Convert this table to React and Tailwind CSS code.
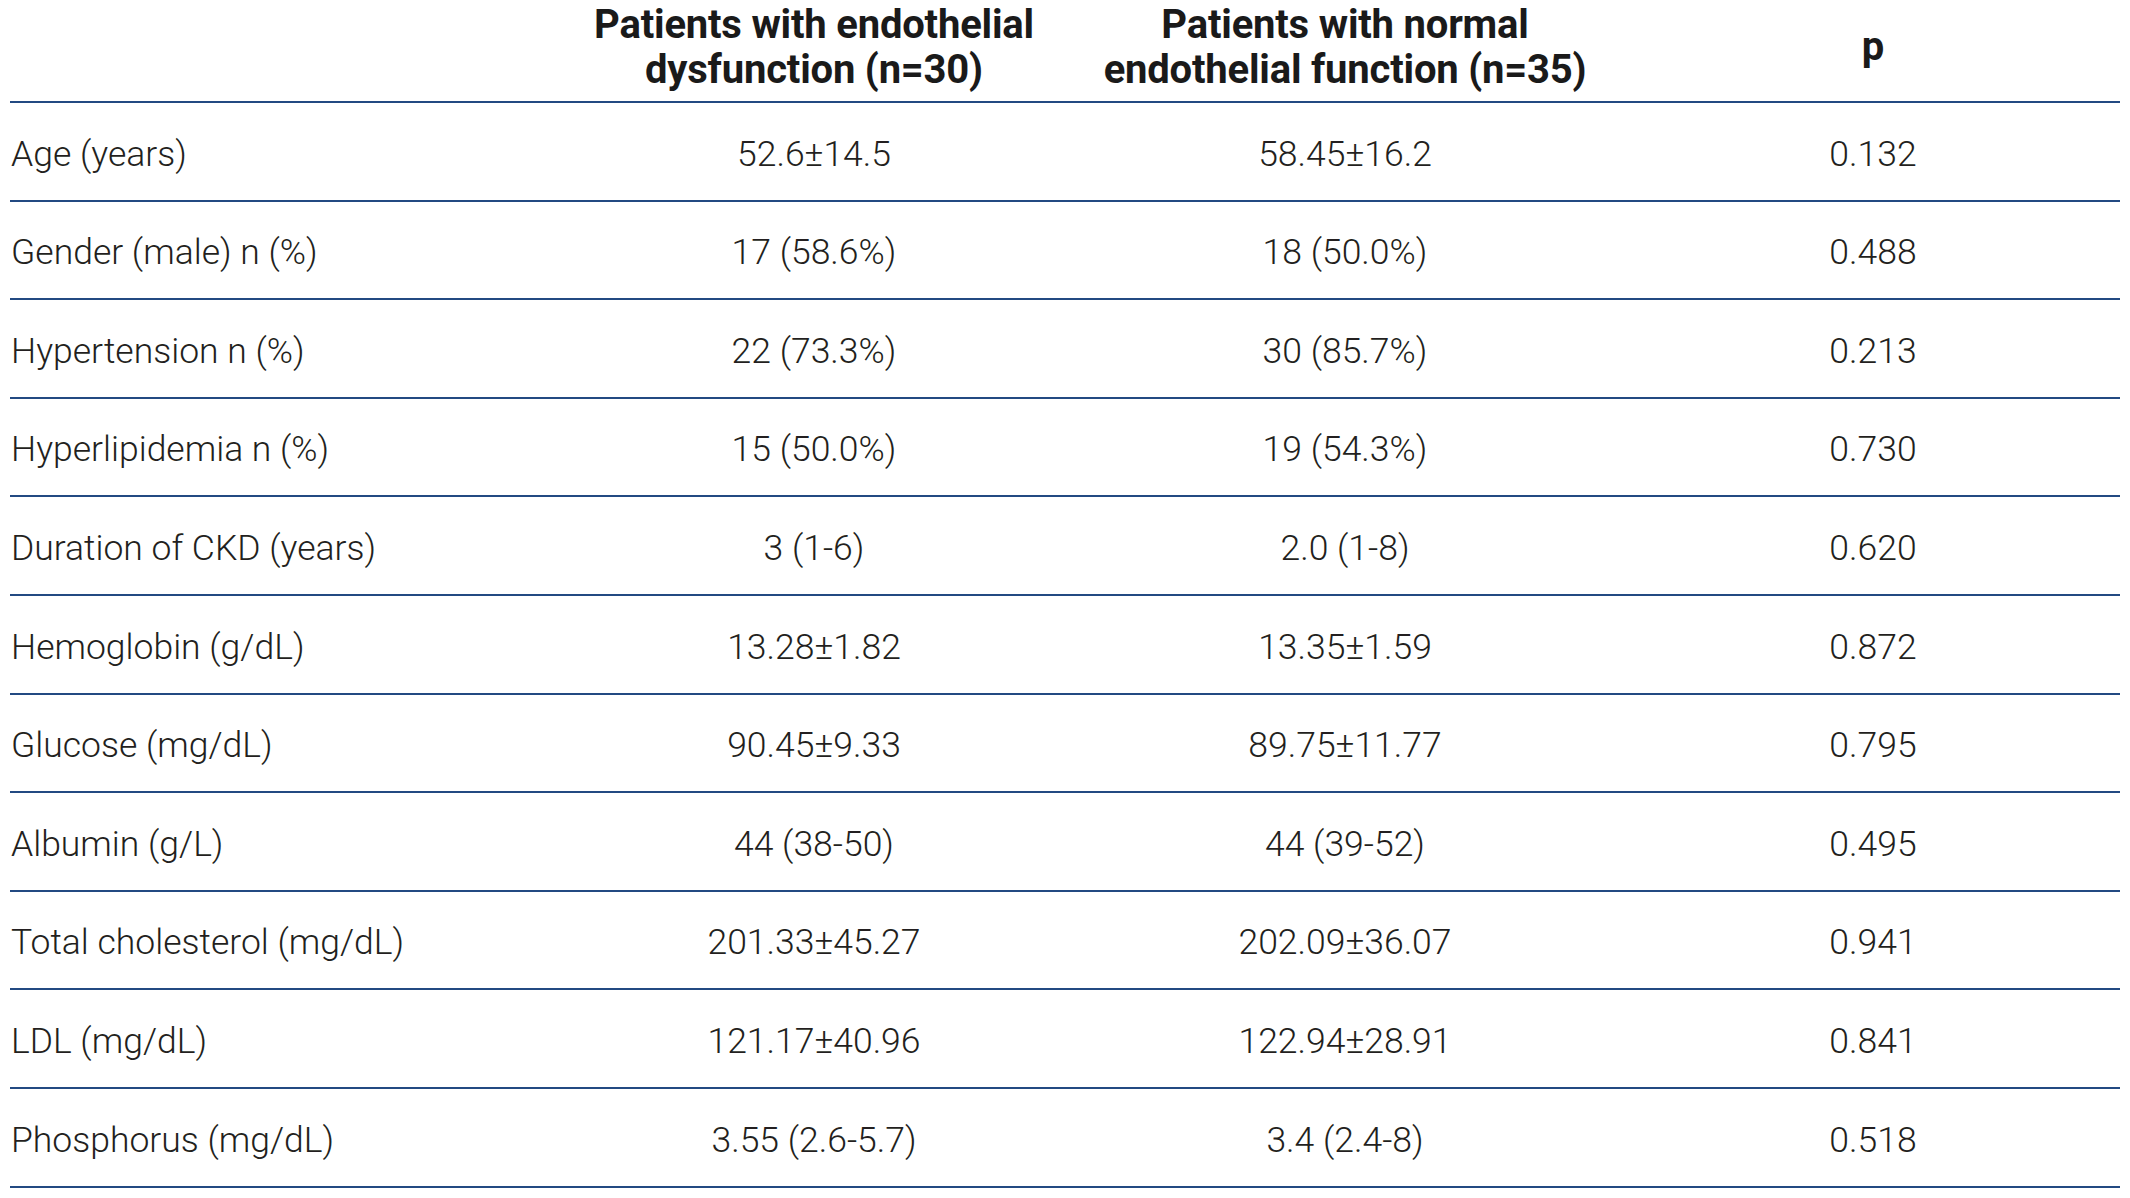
const rows = [
  ['Age (years)', '52.6±14.5', '58.45±16.2', '0.132'],
  ['Gender (male) n (%)', '17 (58.6%)', '18 (50.0%)', '0.488'],
  ['Hypertension n (%)', '22 (73.3%)', '30 (85.7%)', '0.213'],
  ['Hyperlipidemia n (%)', '15 (50.0%)', '19 (54.3%)', '0.730'],
  ['Duration of CKD (years)', '3 (1-6)', '2.0 (1-8)', '0.620'],
  ['Hemoglobin (g/dL)', '13.28±1.82', '13.35±1.59', '0.872'],
  ['Glucose (mg/dL)', '90.45±9.33', '89.75±11.77', '0.795'],
  ['Albumin (g/L)', '44 (38-50)', '44 (39-52)', '0.495'],
  ['Total cholesterol (mg/dL)', '201.33±45.27', '202.09±36.07', '0.941'],
  ['LDL (mg/dL)', '121.17±40.96', '122.94±28.91', '0.841'],
  ['Phosphorus (mg/dL)', '3.55 (2.6-5.7)', '3.4 (2.4-8)', '0.518'],
]

const cols = 'grid grid-cols-[540px_528px_534px_1fr]'

export default function App() {
  return (
    <div className="min-h-screen bg-white font-['Roboto',sans-serif] text-[#231f20]">
      <div className="pl-[10px] pr-[10px]">
        <div className={`${cols} h-[103px] border-b-2 border-[#234a82] pb-[8px] text-[40px] font-bold leading-[45px] tracking-[-0.2px] text-[#1a1a1a]`}>
          <div />
          <div className="flex items-center justify-center whitespace-nowrap text-center">
            Patients with endothelial<br />dysfunction (n=30)
          </div>
          <div className="flex items-center justify-center whitespace-nowrap text-center">
            Patients with normal<br />endothelial function (n=35)
          </div>
          <div className="flex items-center justify-center pl-[14px]">p</div>
        </div>
        {rows.map((r) => (
          <div key={r[0]} className={`${cols} h-[98.6px] items-center border-b-2 border-[#234a82] pt-[6px] text-[35.5px] font-light`}>
            <div className="pl-[1px]">{r[0]}</div>
            <div className="text-center">{r[1]}</div>
            <div className="text-center">{r[2]}</div>
            <div className="pl-[14px] text-center">{r[3]}</div>
          </div>
        ))}
      </div>
    </div>
  )
}
